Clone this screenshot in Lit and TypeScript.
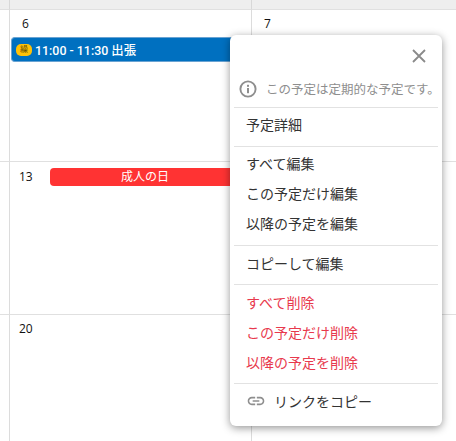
import { LitElement, html, css } from "lit";
import { customElement } from "lit/decorators.js";

@customElement("app-root")
export class AppRoot extends LitElement {
  static styles = css`
    :host { display: block; position: relative; width: 456px; height: 441px; overflow: hidden; background: #fff; font-family: "Open Sans", "Noto Sans CJK JP", sans-serif; }
    .cal { display: grid; grid-template-columns: 9px 242px 1fr; grid-template-rows: 10px 152px 153px 1fr; height: 441px; }
    .hd { background: #eeeeee; border-bottom: 1px solid #e0e0e0; box-sizing: border-box; }
    .hd.v { border-left: 1px solid #d8d8d8; }
    .gut { border-bottom: 1px solid #e0e0e0; }
    .cell { border-left: 1px solid #dcdcdc; border-bottom: 1px solid #e0e0e0; box-sizing: border-box; font-size: 12px; color: #111; min-width: 0; }
    .last, .gut.last { border-bottom: none; }
    .num { display: block; padding: 6px 0 0 12px; line-height: 15px; }
    .num.wide { padding-left: 9px; }
    .ev { margin: 6px 0 0 1px; height: 25px; box-sizing: border-box; background: #0070c0; border-radius: 4px 0 0 4px; color: #fff; display: flex; align-items: center; gap: 3px; padding: 0 0 0 4px; font-family: Roboto, "Noto Sans CJK JP", sans-serif; font-size: 12.4px; font-weight: 500; border: 1px solid #6aa3d2; border-right: none; }
    .badge { width: 16px; height: 12px; background: #ffc107; border-radius: 5px; color: #6b5200; font-size: 8px; line-height: 12px; text-align: center; flex: none; font-weight: 400; }
    .row13 { display: flex; align-items: flex-start; padding: 6px 11px 0 0; }
    .row13 .num { padding: 1px 0 0 9px; width: 31px; flex: none; }
    .holiday { flex: 1; height: 18px; background: #ff3333; color: #fff; border-radius: 4px 0 0 4px; font-size: 12px; line-height: 18px; text-align: center; }
    .pop { position: absolute; left: 230px; top: 35px; width: 212px; height: 391px; background: #fff; border-radius: 6px; box-shadow: 0 2px 8px rgba(0,0,0,.42); box-sizing: border-box; padding: 0 4px; display: flex; flex-direction: column; font-size: 14px; color: #333; }
    .close { display: flex; justify-content: flex-end; padding: 14px 12px 0 0; height: 21px; }
    .info { display: flex; align-items: center; gap: 9px; padding-left: 5px; height: 37px; color: #8e8e8e; font-size: 12.5px; white-space: nowrap; }
    .info svg { flex: none; }
    hr { border: none; border-top: 1px solid #e2e2e2; margin: 0; height: 0; flex: none; }
    .sec { display: flex; flex-direction: column; padding: 2px 0 6px; }
    .sec.low { padding: 3px 0 5px; }
    .it { height: 30px; line-height: 30px; padding-left: 12px; white-space: nowrap; }
    .red { color: #e8394d; }
    .link { display: flex; align-items: center; gap: 8px; height: 30px; padding-left: 12px; }
  `;

  render() {
    return html`
      <div class="cal">
        <div class="hd"></div><div class="hd v"></div><div class="hd v"></div>
        <div class="gut"></div>
        <div class="cell"><span class="num">6</span>
          <div class="ev"><span class="badge">繰</span><span>11:00 - 11:30 出張</span></div>
        </div>
        <div class="cell"><span class="num">7</span></div>
        <div class="gut"></div>
        <div class="cell"><div class="row13"><span class="num">13</span><div class="holiday">成人の日</div></div></div>
        <div class="cell"></div>
        <div class="gut last"></div>
        <div class="cell last"><span class="num wide">20</span></div>
        <div class="cell last"></div>
      </div>
      <div class="pop">
        <div class="close">
          <svg width="14" height="14" viewBox="0 0 14 14"><path d="M1 1L13 13M13 1L1 13" stroke="#8a8a8a" stroke-width="1.8" fill="none"/></svg>
        </div>
        <div class="info">
          <svg width="18" height="18" viewBox="0 0 18 18"><circle cx="9" cy="9" r="7.6" fill="none" stroke="#8e8e8e" stroke-width="1.9"/><rect x="8" y="8" width="2" height="5.2" fill="#8e8e8e"/><rect x="8" y="4.8" width="2" height="2" fill="#8e8e8e"/></svg>
          <span>この予定は定期的な予定です。</span>
        </div>
        <hr />
        <div class="sec"><div class="it">予定詳細</div></div>
        <hr />
        <div class="sec">
          <div class="it">すべて編集</div>
          <div class="it">この予定だけ編集</div>
          <div class="it">以降の予定を編集</div>
        </div>
        <hr />
        <div class="sec low"><div class="it">コピーして編集</div></div>
        <hr />
        <div class="sec low">
          <div class="it red">すべて削除</div>
          <div class="it red">この予定だけ削除</div>
          <div class="it red">以降の予定を削除</div>
        </div>
        <hr />
        <div class="sec">
          <div class="link">
            <svg width="20" height="20" viewBox="0 0 24 24"><path fill="#8e8e8e" d="M3.9 12c0-1.71 1.39-3.1 3.1-3.1h4V7H7c-2.76 0-5 2.24-5 5s2.24 5 5 5h4v-1.9H7c-1.71 0-3.1-1.39-3.1-3.1zM8 13h8v-2H8v2zm9-6h-4v1.9h4c1.71 0 3.1 1.39 3.1 3.1s-1.39 3.1-3.1 3.1h-4V17h4c2.76 0 5-2.24 5-5s-2.24-5-5-5z"/></svg>
            <span>リンクをコピー</span>
          </div>
        </div>
      </div>
    `;
  }
}
